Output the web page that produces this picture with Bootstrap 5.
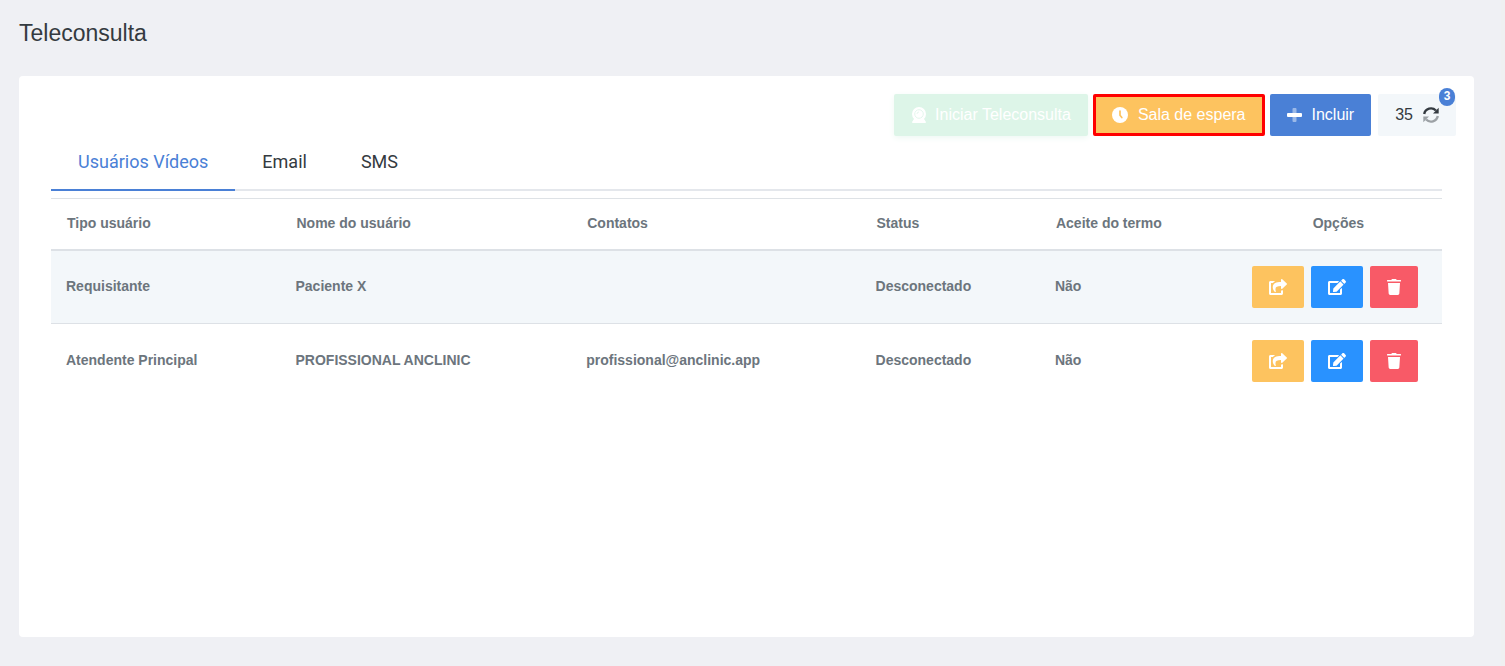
<!DOCTYPE html>
<html lang="pt-BR">
<head>
<meta charset="utf-8">
<meta name="viewport" content="width=device-width, initial-scale=1">
<title>Teleconsulta</title>
<link href="https://cdn.jsdelivr.net/npm/bootstrap@5.3.0/dist/css/bootstrap.min.css" rel="stylesheet">
<style>
  body { font-family: "Liberation Sans", Arial, sans-serif; background: #eff0f4; border-right: 4px solid #eff0f1; }
  .page-title { font-size: 23px; line-height: 32px; color: #343a40; margin: 17px 0 27px; }
  .page-shell { padding: 0 27px 29px 19px; }
  .panel { border: 0; border-radius: 4px; }
  .toolbar { padding: 18px 18px 0; gap: 5px; }
  .toolbar .btn { height: 42px; padding: 0 17px; font-size: 16px; border: 0; border-radius: 2px; gap: 10px; white-space: nowrap; }
  .toolbar .btn-start, .toolbar .btn-start:disabled { background: #ddf5e8; color: #fff; opacity: 1; box-shadow: 0 2px 6px #eef8f3; gap: 8px; }
  .toolbar .btn-wait { background: #fdc35f; color: #fff; border: 3px solid #f00; padding: 0 16px; }
  .toolbar .btn-add { background: #4a80d6; color: #fff; }
  .toolbar .btn-refresh { background: #f3f7fa; color: #343a40; margin-left: 2px; }
  .count-badge { position: absolute; top: -6px; right: 1px; width: 16px; height: 18px; border-radius: 9px; background: #4a80d6; color: #fff; font-size: 12px; font-weight: 700; line-height: 17px; }
  .panel-body { padding: 0 32px; }
  .nav-line { border-bottom: 2px solid #e4e7ec; font-family: Roboto, sans-serif; font-size: 18px; }
  .nav-line .nav-link { color: #343a40; padding: 12px 27px 14px; line-height: 27px; margin-bottom: -2px; border-bottom: 2px solid transparent; }
  .nav-line .nav-link.active { color: #4a80d6; border-color: #4a80d6; }
  .users { margin-top: 7px; font-size: 14px; font-weight: 700; border-top: 1px solid #dee2e6; table-layout: fixed; min-width: 1000px; }
  .users > :not(caption) > * > * { color: #6c757d; padding: 0 16px; background: transparent; box-shadow: none; border-color: #dde1e6; }
  .users > thead > tr > th { height: 51px; border-bottom-width: 2px; vertical-align: middle; }
  .users > tbody > tr > td { height: 74px; padding-bottom: 1px; padding-left: 15px; }
  .users > tbody > tr:first-child { background: #f3f7fa; }
  .users > tbody > tr:last-child > td { border-bottom: 0; }
  .users > tbody > tr > td:last-child { padding: 0 24px 0 0; }
  .users .btn { height: 42px; width: 52px; padding: 0; border: 0; border-radius: 2px; color: #fff; }
  .users .btn-share { background: #fdc35f; }
  .users .btn-edit { background: #2992ff; }
  .users .btn-del { background: #f85a67; width: 48px; }
  .row-actions { gap: 7px; }
  svg { display: block; }
</style>
</head>
<body>
<svg class="d-none" aria-hidden="true">
  <symbol id="i-share" viewBox="0 0 576 512"><path fill="currentColor" d="M568.5 177.4L424.5 313.4C409.3 327.8 384 317.1 384 296v-72c-144.600 1-205.600 35.100-164.800 171.400 4.500 15-12.800 26.600-25 17.300C155.300 383.100 120 326.500 120 269.300c0-143.900 117.600-172.500 264-173.300V24c0-21.200 25.300-31.800 40.500-17.400l144 136c10 9.400 10 25.400 0 34.800zM384 379v69H64V128h51c3.200 0 6.400-1.300 8.600-3.700 15-15.600 32.200-27.900 51-37.700C185.700 80.800 181.600 64 169 64H48C21.500 64 0 85.500 0 112v352c0 26.500 21.500 48 48 48h352c26.500 0 48-21.500 48-48v-88.800c0-8.300-8.200-14-16-11.300a72 72 0 0 1-34.200 3.400c-7.300-1-13.800 4.500-13.800 11.700z"/></symbol>
  <symbol id="i-edit" viewBox="0 0 576 512"><path fill="currentColor" d="M402.600 83.200l90.200 90.200c3.800 3.800 3.800 10 0 13.800L274.400 405.600l-92.800 10.300c-12.400 1.400-22.900-9.100-21.500-21.500l10.300-92.800L388.800 83.200c3.800-3.800 10-3.800 13.800 0zm162-22.900l-48.800-48.800c-15.200-15.200-39.900-15.200-55.200 0l-35.400 35.400c-3.800 3.800-3.800 10 0 13.800l90.200 90.200c3.800 3.800 10 3.800 13.800 0l35.400-35.400c15.200-15.300 15.200-40 0-55.200zM384 346.200V448H64V128h229.800c3.200 0 6.200-1.300 8.500-3.500l40-40c7.600-7.600 2.200-20.500-8.500-20.500H48C21.500 64 0 85.500 0 112v352c0 26.500 21.500 48 48 48h352c26.500 0 48-21.500 48-48V306.200c0-10.700-12.900-16-20.500-8.500l-40 40c-2.200 2.300-3.500 5.300-3.500 8.500z"/></symbol>
  <symbol id="i-trash" viewBox="0 0 448 512"><path fill="currentColor" d="M432 32H312l-9.400-18.700A24 24 0 0 0 281.100 0H166.800a23.700 23.700 0 0 0-21.400 13.300L136 32H16A16 16 0 0 0 0 48v16a16 16 0 0 0 16 16h416a16 16 0 0 0 16-16V48a16 16 0 0 0-16-16zM53.200 467a48 48 0 0 0 47.900 45h245.800a48 48 0 0 0 47.900-45L416 128H32z"/></symbol>
</svg>

<main class="page-shell min-vh-100 d-flex flex-column">
  <h1 class="page-title fw-normal">Teleconsulta</h1>
  <section class="card panel flex-grow-1">
    <div class="toolbar d-flex flex-wrap justify-content-end">
      <button type="button" class="btn btn-start d-flex align-items-center" disabled>
        <svg width="16" height="16" viewBox="0 0 16 16"><circle cx="8" cy="7" r="7" fill="#fff"/><circle cx="8" cy="7" r="4.300" fill="none" stroke="#ddf5e8" stroke-width=".8"/><path d="M6 7a2 2 0 0 1 2-2" fill="none" stroke="#ddf5e8" stroke-width=".7"/><path d="M3 12h10l2 3q0 1-1 1H2q-1 0-1-1z" fill="#fff"/></svg>
        Iniciar Teleconsulta
      </button>
      <button type="button" class="btn btn-wait d-flex align-items-center">
        <svg width="16" height="16" viewBox="0 0 16 16"><circle cx="8" cy="8" r="8" fill="#fff"/><path d="M8 4V8.300l1.800 2.200" fill="none" stroke="#fdc35f" stroke-width="1.700" stroke-linecap="round"/></svg>
        Sala de espera
      </button>
      <button type="button" class="btn btn-add d-flex align-items-center">
        <svg width="15" height="16" viewBox="0 0 15 16"><rect x="5.500" y="1" width="4" height="14" rx="1" fill="#fff" opacity=".45"/><rect y="6" width="15" height="4" rx="1" fill="#fff"/></svg>
        Incluir
      </button>
      <button type="button" class="btn btn-refresh position-relative d-flex align-items-center">
        35
        <svg width="16" height="16" viewBox="0 0 16 16"><path d="M1.200 7a6.900 6.900 0 0 1 11.700-3.500" fill="none" stroke="#343a40" stroke-width="2.400"/><path d="M15.700.8v5.700H10z" fill="#343a40"/><g opacity=".45"><path d="M14.800 9a6.900 6.900 0 0 1-11.700 3.500" fill="none" stroke="#343a40" stroke-width="2.400"/><path d="M.3 15.200V9.500H6z" fill="#343a40"/></g></svg>
        <span class="count-badge text-center">3</span>
      </button>
    </div>
    <div class="panel-body">
      <nav class="nav nav-line">
        <a class="nav-link active" href="#videos" aria-current="page">Usuários Vídeos</a>
        <a class="nav-link" href="#email">Email</a>
        <a class="nav-link" href="#sms">SMS</a>
      </nav>
      <div class="table-responsive">
        <table class="table users align-middle mb-0">
          <colgroup><col style="width:16.5%"><col style="width:20.9%"><col style="width:20.8%"><col style="width:12.9%"><col style="width:14%"><col style="width:14.9%"></colgroup>
          <thead>
            <tr><th scope="col">Tipo usuário</th><th scope="col">Nome do usuário</th><th scope="col">Contatos</th><th scope="col">Status</th><th scope="col">Aceite do termo</th><th scope="col" class="text-center">Opções</th></tr>
          </thead>
          <tbody>
            <tr>
              <td>Requisitante</td><td>Paciente X</td><td></td><td>Desconectado</td><td>Não</td>
              <td><div class="row-actions d-flex justify-content-end">
                <button type="button" class="btn btn-share d-flex align-items-center justify-content-center" aria-label="Compartilhar"><svg width="18" height="16"><use href="#i-share"/></svg></button>
                <button type="button" class="btn btn-edit d-flex align-items-center justify-content-center" aria-label="Editar"><svg width="18" height="16"><use href="#i-edit"/></svg></button>
                <button type="button" class="btn btn-del d-flex align-items-center justify-content-center" aria-label="Excluir"><svg width="14" height="16"><use href="#i-trash"/></svg></button>
              </div></td>
            </tr>
            <tr>
              <td>Atendente Principal</td><td>PROFISSIONAL ANCLINIC</td><td>profissional@anclinic.app</td><td>Desconectado</td><td>Não</td>
              <td><div class="row-actions d-flex justify-content-end">
                <button type="button" class="btn btn-share d-flex align-items-center justify-content-center" aria-label="Compartilhar"><svg width="18" height="16"><use href="#i-share"/></svg></button>
                <button type="button" class="btn btn-edit d-flex align-items-center justify-content-center" aria-label="Editar"><svg width="18" height="16"><use href="#i-edit"/></svg></button>
                <button type="button" class="btn btn-del d-flex align-items-center justify-content-center" aria-label="Excluir"><svg width="14" height="16"><use href="#i-trash"/></svg></button>
              </div></td>
            </tr>
          </tbody>
        </table>
      </div>
    </div>
  </section>
</main>
<script src="https://cdn.jsdelivr.net/npm/bootstrap@5.3.0/dist/js/bootstrap.bundle.min.js"></script>
</body>
</html>
